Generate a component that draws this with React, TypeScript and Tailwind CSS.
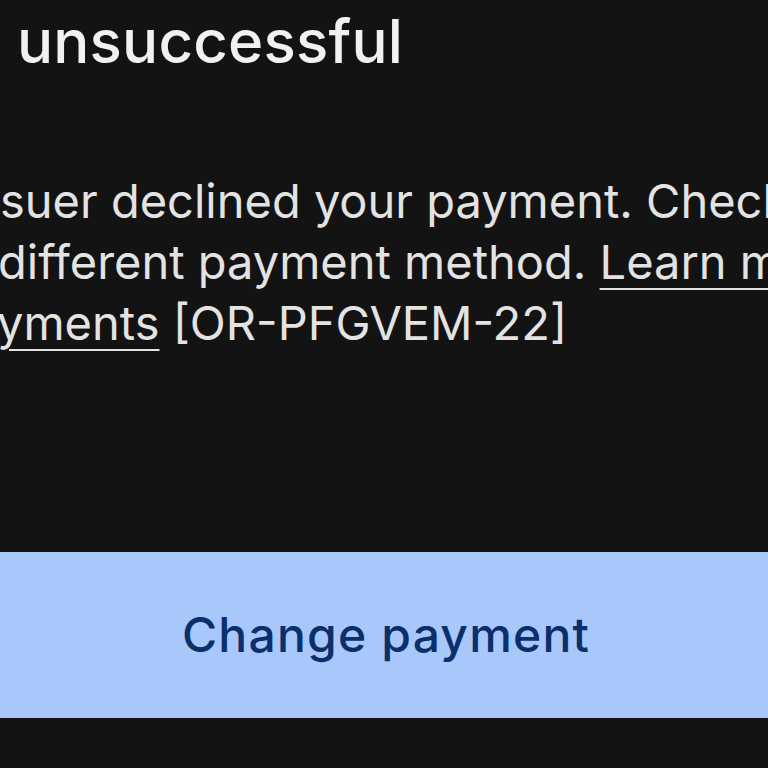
export default function App() {
  const font = { fontFamily: 'Inter, Roboto, sans-serif' };
  return (
    <div className="w-[768px] h-[768px] bg-[#131313] overflow-hidden flex flex-col" style={font}>
      <div className="mt-[5px] pl-[17px] text-[60px] leading-[72px] font-medium tracking-[0.2px] text-[#f1f1f1] whitespace-nowrap">
        unsuccessful
      </div>
      <div className="mt-[93px] text-[47px] leading-[61px] text-[#e3e3e3] whitespace-nowrap">
        <div>suer declined your payment. Check your card</div>
        <div className="ml-[-2px]">
          different payment method. <span className="underline underline-offset-[9px] decoration-[2px]">Learn more about</span>
        </div>
        <div className="ml-[-3px]">
          <span className="underline underline-offset-[9px] decoration-[2px]">yments</span> [OR-PFGVEM-22]
        </div>
      </div>
      <div className="mt-[199px] h-[166px] bg-[#a8c7fa] flex items-center justify-center shrink-0">
        <span className="text-[48px] font-medium tracking-[1.2px] text-[#0b2f6b] pl-[4px]">Change payment</span>
      </div>
    </div>
  );
}
